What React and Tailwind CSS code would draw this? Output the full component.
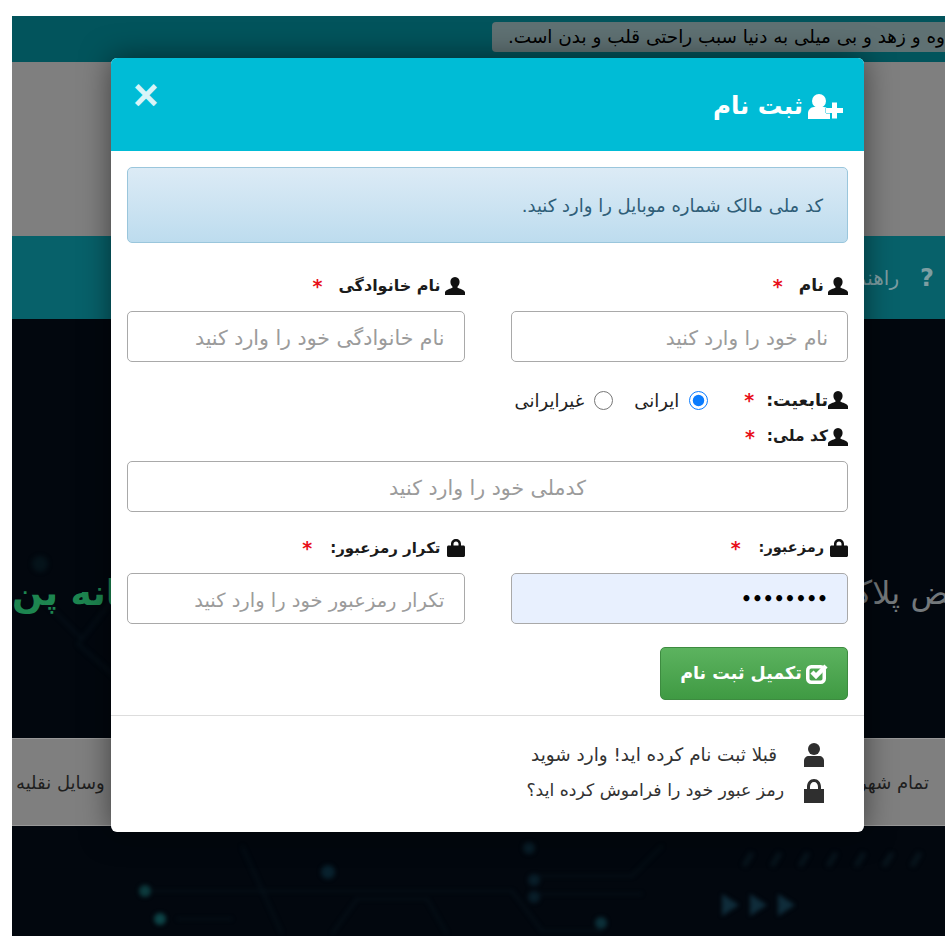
import React from "react";

const fa = "font-['DejaVu_Sans','Noto_Sans',sans-serif]";

const UserIcon = ({ className }) => (
    <svg viewBox="0 0 20 18" className={className} fill="currentColor">
        <path d="M10 0c3 0 4.600 2.200 4.600 4.800 0 2-.8 3.600-1.900 4.800-.5.6-.3 1.200.5 1.500 2.800 1 6.300 2 6.800 4.200.1.700.1 1.700 0 2.700H0c-.1-1-.1-2 0-2.700.5-2.200 4-3.200 6.800-4.200.8-.3 1-.9.5-1.500C6.200 8.400 5.400 6.800 5.400 4.800 5.400 2.200 7 0 10 0z" />
    </svg>
);

const LockIcon = ({ className }) => (
    <svg viewBox="0 0 18 18" className={className} fill="currentColor">
        <path d="M4 6.500V5c0-3 2.200-5 5-5s5 2 5 5v1.500h2.500c.8 0 1.500.7 1.500 1.500v8.500c0 .8-.7 1.500-1.500 1.500h-15C.7 18 0 17.300 0 16.500V8c0-.8.7-1.500 1.500-1.500zm2.500 0h5V5c0-1.500-1-2.600-2.500-2.600S6.500 3.500 6.500 5z" />
    </svg>
);

const Star = () => <span className="text-[#e8101a] text-[19px] font-bold">*</span>;

const FieldLabel = ({ icon, text, size = "text-[15.500px]", gap = "gap-1", starGap = "mr-3" }) => (
    <div className={`flex items-center justify-start ${gap} h-[24px] ${size} font-bold text-[#1b1b1b] ${fa}`}>
        {icon === "lock" ? <LockIcon className="w-[18px] h-[18px] text-[#111]" /> : <UserIcon className="w-[20px] h-[18px] text-[#111]" />}
        <span>{text}</span>
        <span className={starGap}><Star /></span>
    </div>
);

const Input = ({ placeholder, size = "text-[20px]", align = "" }) => (
    <input
        dir="rtl"
        placeholder={placeholder}
        className={`w-full h-[51px] px-[19px] pt-[3px] bg-white border border-[#a9a9a9] rounded-[5px] ${size} ${align} placeholder:text-[#9b9b9b] outline-none ${fa}`}
    />
);

function Backdrop() {
    return (
        <div className={`flex flex-col h-[920px] overflow-hidden ${fa}`}>
            <div className="h-[46px] bg-[#02545c] flex justify-end items-start pt-[6px]">
                <div className="h-[30px] w-[453px] bg-[#5f7173] rounded-l-[4px] flex items-center justify-end text-[18.400px] text-black whitespace-nowrap overflow-hidden">
                    <span dir="rtl">وه و زهد و بی میلی به دنیا سبب راحتی قلب و بدن است.</span>
                </div>
            </div>
            <div className="h-[174px] bg-[#7f7f7f]"></div>
            <div className="h-[83px] bg-[#07616a] flex items-center justify-end pr-[11px] gap-[21px] font-bold text-[#7d9ea2]">
                <span className="text-[20px] font-normal">راهنما</span>
                <span className="text-[24px]">?</span>
            </div>
            <div className="relative h-[419px] bg-[#02070e] flex items-center justify-between pt-[128px] text-[36px] overflow-hidden whitespace-nowrap">
                <svg viewBox="0 0 933 419" className="absolute inset-0 w-full h-full blur-[2px]" fill="none" stroke="#07131b" strokeWidth="2">
                    <path d="M66 325l35-45 40 35-35 45zM30 280l40 40" />
                    <circle cx="28" cy="245" r="8" fill="#05131a" stroke="none" />
                </svg>
                <span dir="rtl" className="relative text-[#1d8550] font-bold">سامانه پن</span>
                <span dir="rtl" className="relative text-[#73787b] text-[32px] -mr-[14px]">ـض پلاک</span>
            </div>
            <div className="h-[88px] bg-[#7f7f7f] border-y border-[#989898] flex items-center justify-between pl-[4px] pr-[16px] text-[18px] text-[#1f1f1f] whitespace-nowrap">
                <span dir="rtl">وسایل نقلیه</span>
                <span dir="rtl">تمام شهر</span>
            </div>
            <div className="h-[110px] bg-[#02070e]">
                <svg viewBox="0 0 933 110" className="w-full h-full blur-[2px]">
                    <g fill="none" stroke="#07151d" strokeWidth="1.500">
                        <path d="M140 65h360l30 40h60M165 93h55M320 108l25-35h70l20 35M230 20l40 88M520 50h100l30-30M520 68h110" />
                    </g>
                    <circle cx="133" cy="65" r="6" fill="#0c3a3d" />
                    <circle cx="148" cy="93" r="6" fill="#0d4447" />
                    <circle cx="316" cy="46" r="7" fill="#08212d" />
                    <circle cx="517" cy="22" r="6" fill="#081d28" />
                    <circle cx="522" cy="54" r="6" fill="#081d28" />
                    <circle cx="522" cy="71" r="6" fill="#081d28" />
                    <circle cx="589" cy="97" r="6" fill="#0b2f38" />
                    <path d="M710 68l17 11-17 11zM738 68l17 11-17 11zM766 68l17 11-17 11z" fill="#0f2c3a" />
                    <path d="M732 40l8-13M760 40l8-13M788 40l8-13M816 40l8-13M844 40l8-13M872 40l8-13M900 40l8-13" stroke="#08151d" strokeWidth="5" />
                </svg>
            </div>
        </div>
    );
}

export default function App() {
    return (
        <div className="relative w-[948px] h-[948px] bg-white pt-[16px] pl-[12px] pr-[3px] overflow-hidden">
            <Backdrop />
            {/* modal */}
            <div dir="rtl" className={`absolute left-[111px] top-[58px] w-[753px] h-[774px] bg-white rounded-[6px] shadow-[0_0_30px_rgba(0,0,0,0.5)] overflow-hidden ${fa}`}>
                <div className="h-[93px] bg-[#00bcd6] flex items-start justify-between pr-[21px] pl-[22px]">
                    <div className="flex items-center gap-[5px] mt-[30px] text-white text-[24.500px] font-bold">
                        <svg viewBox="0 0 35 25" className="w-[35px] h-[25px]" fill="currentColor">
                            <circle cx="11" cy="7" r="7" />
                            <path d="M0 25v-6c0-3 3-6 6-6h10c3 0 6 3 6 6v6z" />
                            <path d="M18 14h6V8.500h5V14h6v5h-6v5.500h-5V19h-6z" stroke="#00bcd6" strokeWidth="1" paintOrder="stroke" />
                        </svg>
                        <span>ثبت نام</span>
                    </div>
                    <span className="mt-[13px] text-[#d8f4f8] text-[44px] leading-[48px] font-bold font-['Liberation_Sans',sans-serif]">×</span>
                </div>
                <div className="px-[16px] pt-[16px]">
                    <div className="h-[76px] flex items-center px-[24px] border border-[#9ac6dc] rounded-[5px] bg-gradient-to-b from-[#dcebf6] to-[#bddcee] text-[18px] text-[#2f5e78]">
                        کد ملی مالک شماره موبایل را وارد کنید.
                    </div>
                    <div className="grid grid-cols-2 gap-x-[46px] mt-[31px]">
                        <div>
                            <FieldLabel text="نام" size="text-[17px]" />
                            <div className="mt-[13px]"><Input placeholder="نام خود را وارد کنید" /></div>
                        </div>
                        <div>
                            <FieldLabel text="نام خانوادگی" size="text-[16px]" />
                            <div className="mt-[13px]"><Input placeholder="نام خانوادگی خود را وارد کنید" size="text-[20.500px]" /></div>
                        </div>
                    </div>
                    <div className="flex items-center mt-[25px] h-[26px]">
                        <FieldLabel text="تابعیت:" size="text-[17.400px]" gap="gap-0" />
                        <label className="flex items-center gap-[10px] mr-[36px] text-[18px] text-[#222]">
                            <input type="radio" name="nat" defaultChecked className="w-[19px] h-[19px] accent-[#0a7cff]" />
                            ایرانی
                        </label>
                        <label className="flex items-center gap-[10px] mr-[21px] text-[18px] text-[#222]">
                            <input type="radio" name="nat" className="w-[19px] h-[19px]" />
                            غیرایرانی
                        </label>
                    </div>
                    <div className="mt-[12px]">
                        <FieldLabel text="کد ملی:" gap="gap-0" />
                    </div>
                    <div className="mt-[12px]"><Input placeholder="کدملی خود را وارد کنید" size="text-[20.500px]" align="text-center" /></div>
                    <div className="grid grid-cols-2 gap-x-[46px] mt-[24px]">
                        <div>
                            <FieldLabel icon="lock" text="رمزعبور:" size="text-[14.500px]" gap="gap-[6px]" />
                            <div className="mt-[13px]">
                                <input
                                    dir="rtl"
                                    type="password"
                                    defaultValue="12345678"
                                    className="w-full h-[51px] px-[19px] bg-[#e8f0fe] border border-[#a9a9a9] rounded-[5px] text-[17px] font-bold outline-none"
                                />
                            </div>
                        </div>
                        <div>
                            <FieldLabel icon="lock" text="تکرار رمزعبور:" size="text-[15px]" gap="gap-[6px]" />
                            <div className="mt-[13px]"><Input placeholder="تکرار رمزعبور خود را وارد کنید" size="text-[19.500px]" /></div>
                        </div>
                    </div>
                    <div className="mt-[23px]">
                        <button className="w-[188px] h-[53px] flex items-center justify-center gap-1 rounded-[5px] border border-[#3d8b40] bg-gradient-to-b from-[#5cb35f] to-[#3f9a43] text-white text-[17.500px] font-bold">
                            <svg viewBox="0 0 22 20" className="w-[22px] h-[20px]" fill="none" stroke="currentColor">
                                <rect x="1.750" y="2.750" width="16.500" height="15.500" rx="3.500" strokeWidth="3.500" />
                                <path d="M6 8l4 4 10-10" strokeWidth="4.500" />
                            </svg>
                            تکمیل ثبت نام
                        </button>
                    </div>
                </div>
                <div className="mt-[15px] border-t border-[#dddddd] pt-[21px] pr-[40px] text-[#333]">
                    <div className="flex items-center h-[36px] text-[18.400px]">
                        <svg viewBox="0 0 20 24" className="w-[20px] h-[24px] text-[#2f2f2f]" fill="currentColor">
                            <circle cx="10" cy="6" r="6" />
                            <path d="M0 24v-6c0-3 2-5 5-5h10c3 0 5 2 5 5v6z" />
                        </svg>
                        <span className="mr-[27px]">قبلا ثبت نام کرده اید! وارد شوید</span>
                    </div>
                    <div className="flex items-center h-[36px] text-[17.300px]">
                        <svg viewBox="0 0 20 24" className="w-[20px] h-[24px] text-[#2f2f2f]" fill="currentColor">
                            <path d="M3 10V8c0-5 3-8 7-8s7 3 7 8v2h3v14H0V10zm3 0h8V8c0-3-1.500-5-4-5S6 5 6 8z" />
                        </svg>
                        <span className="mr-[20px]">رمز عبور خود را فراموش کرده اید؟</span>
                    </div>
                </div>
            </div>
        </div>
    );
}
